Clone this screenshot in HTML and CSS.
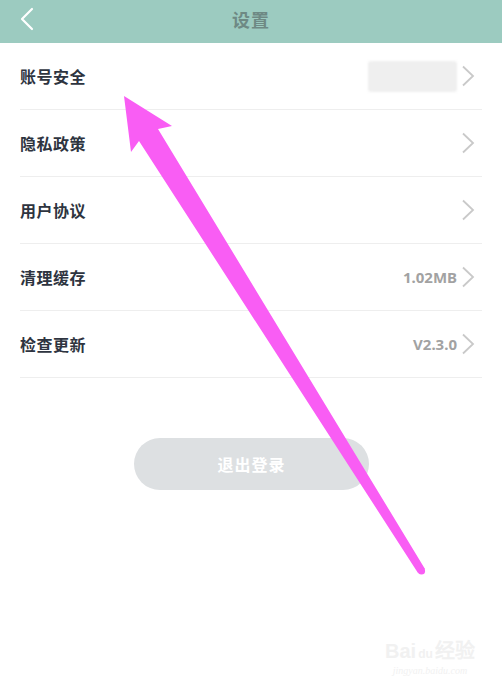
FILE: index.html
```html
<!DOCTYPE html>
<html lang="zh-CN">
<head>
    <meta charset="UTF-8">
    <meta name="viewport" content="width=device-width, initial-scale=1.0">
    <title>设置</title>
    <link rel="stylesheet" href="styles.css">
</head>
<body>
    <div class="header">
        <svg class="back" width="16" height="24" viewBox="0 0 16 24">
            <polyline points="13,2 3,12 13,22" fill="none" stroke="#ffffff" stroke-width="2.2" stroke-linecap="round" stroke-linejoin="round"/>
        </svg>
        <div class="title">设置</div>
    </div>

    <div class="list">
        <div class="row">
            <span class="label">账号安全</span>
            <span class="right">
                <span class="blur"></span>
                <svg class="arrow" width="14" height="22" viewBox="0 0 14 22"><polyline points="2,1.5 12,11 2,20.5" fill="none" stroke="#c9c9c9" stroke-width="1.8"/></svg>
            </span>
        </div>
        <div class="row">
            <span class="label">隐私政策</span>
            <span class="right">
                <svg class="arrow" width="14" height="22" viewBox="0 0 14 22"><polyline points="2,1.5 12,11 2,20.5" fill="none" stroke="#c9c9c9" stroke-width="1.8"/></svg>
            </span>
        </div>
        <div class="row">
            <span class="label">用户协议</span>
            <span class="right">
                <svg class="arrow" width="14" height="22" viewBox="0 0 14 22"><polyline points="2,1.5 12,11 2,20.5" fill="none" stroke="#c9c9c9" stroke-width="1.8"/></svg>
            </span>
        </div>
        <div class="row">
            <span class="label">清理缓存</span>
            <span class="right">
                <span class="value">1.02MB</span>
                <svg class="arrow" width="14" height="22" viewBox="0 0 14 22"><polyline points="2,1.5 12,11 2,20.5" fill="none" stroke="#c9c9c9" stroke-width="1.8"/></svg>
            </span>
        </div>
        <div class="row">
            <span class="label">检查更新</span>
            <span class="right">
                <span class="value">V2.3.0</span>
                <svg class="arrow" width="14" height="22" viewBox="0 0 14 22"><polyline points="2,1.5 12,11 2,20.5" fill="none" stroke="#c9c9c9" stroke-width="1.8"/></svg>
            </span>
        </div>
    </div>

    <div class="btn-wrap">
        <button class="logout">退出登录</button>
    </div>

    <!-- annotation arrow drawn over the screenshot -->
    <svg class="pointer" width="502" height="691" viewBox="0 0 502 691">
        <polygon points="124,96 172,126 158,129 425,569 418,573 139,141 131,152" fill="#f95df4"/>
        <circle cx="421.5" cy="571" r="3.6" fill="#f95df4"/>
    </svg>

    <div class="watermark">
        <div class="wm-logo">Bai<span class="paw">du</span>经验</div>
        <div class="wm-url">jingyan.baidu.com</div>
    </div>
</body>
</html>
```

FILE: styles.css
```css
body {
    margin: 0;
    background: #ffffff;
    font-family: "Noto Sans CJK SC", "Noto Sans", sans-serif;
    width: 502px;
    height: 691px;
    position: relative;
    overflow: hidden;
}

.header {
    height: 43px;
    box-sizing: border-box;
    padding-bottom: 6px;
    background-color: #9ccbc0;
    display: flex;
    align-items: center;
    justify-content: center;
    position: relative;
}

.back {
    position: absolute;
    left: 19px;
    top: 7px;
}

.title {
    font-size: 18px;
    font-weight: bold;
    color: #6e8984;
    letter-spacing: 1px;
}

.list {
    padding: 0 20px;
}

.row {
    height: 66px;
    border-bottom: 1px solid #eeeeee;
    display: flex;
    align-items: center;
    justify-content: space-between;
}

.label {
    font-size: 16px;
    font-weight: bold;
    color: #2e3440;
    letter-spacing: 0.5px;
}

.right {
    display: flex;
    align-items: center;
    gap: 4px;
    margin-right: 7px;
}

.blur {
    width: 89px;
    height: 31px;
    background: #efefef;
    border-radius: 3px;
    filter: blur(1px);
}

.value {
    font-family: "Noto Sans", sans-serif;
    font-size: 15px;
    font-weight: bold;
    color: #a2a2a2;
}

.arrow {
    display: block;
}

.btn-wrap {
    display: flex;
    justify-content: center;
    margin-top: 60px;
}

.logout {
    width: 235px;
    height: 52px;
    border: none;
    border-radius: 26px;
    background-color: #dde0e2;
    color: #ffffff;
    font-family: "Noto Sans CJK SC", sans-serif;
    font-size: 16px;
    font-weight: bold;
    letter-spacing: 1px;
    margin-left: 1px;
}

.pointer {
    position: absolute;
    left: 0;
    top: 0;
}

.watermark {
    position: absolute;
    left: 385px;
    top: 640px;
    color: #f1f1f1;
    text-align: center;
}

.wm-logo {
    font-family: "Liberation Sans", sans-serif;
    font-size: 20px;
    font-weight: bold;
    line-height: 22px;
}

.paw {
    font-size: 12px;
    margin: 0 2px;
}

.wm-url {
    font-family: "Liberation Serif", serif;
    font-style: italic;
    font-size: 10px;
}
```
